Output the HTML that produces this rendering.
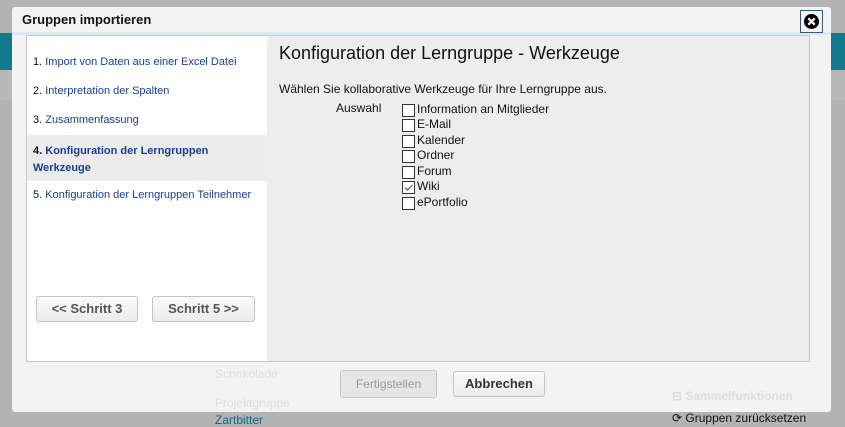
<!DOCTYPE html>
<html><head><meta charset="utf-8"><style>
body{margin:0;width:845px;height:425px;overflow:hidden;background:#b3b3b3;font-family:"Liberation Sans",Arial,sans-serif;position:relative}
.a{position:absolute}
.dlg{left:12px;top:7px;width:819px;height:405px;background:#f3f3f3;border-radius:3px}
.frame{left:26px;top:35px;width:782px;height:325px;border:1px solid #c8c8c8;background:#ededed}
.left{left:27px;top:36px;width:240px;height:325px;background:#fff}
.it{position:absolute;left:6px;font-size:11px;color:#1c3c94}
.it b,.it span.n{color:#111}
.btn{position:absolute;border:1px solid #c4c4c4;border-radius:3px;background:linear-gradient(#fafafa,#ececec);font-size:13px;font-weight:bold;color:#555;text-align:center;box-sizing:border-box}
.cb{position:absolute;left:402px;width:11px;height:11px;border:1px solid #333;background:#fff}
.lb{position:absolute;left:417px;font-size:12px;color:#111}
</style></head><body>
<div class="a" style="left:0;top:33px;width:845px;height:37px;background:#137a8e"></div>
<div class="a" style="left:0;top:70px;width:845px;height:30px;background:#b8b8b8"></div>
<div class="a" style="left:215px;top:413px;font-size:12px;color:#136a7e">Zartbitter</div>
<div class="a" style="left:672px;top:411px;font-size:12px;color:#111">⟳ Gruppen zurücksetzen</div>
<div class="a dlg"></div>
<div class="a" style="left:12px;top:32px;width:819px;height:3px;background:#dce9ee"></div>
<div class="a" style="left:22px;top:12px;font-size:13px;font-weight:bold;color:#111">Gruppen importieren</div>
<div class="a" style="left:800px;top:10px;width:23px;height:23px;border:1px solid #3b5575;box-sizing:border-box"><svg width="21" height="21" viewBox="0 0 21 21"><circle cx="10.5" cy="10.5" r="7.5" fill="#000"/><path d="M7.3 7.3l6.4 6.4M13.7 7.3l-6.4 6.4" stroke="#fff" stroke-width="2.2"/></svg></div>
<div class="a frame"></div>
<div class="a left">
<div class="it" style="top:20px"><span class="n">1.</span> Import von Daten aus einer Excel Datei</div>
<div class="it" style="top:49px"><span class="n">2.</span> Interpretation der Spalten</div>
<div class="it" style="top:78px"><span class="n">3.</span> Zusammenfassung</div>
<div class="a" style="left:0;top:99px;width:240px;height:46px;background:#ececec"></div>
<div class="it" style="top:107px;font-weight:bold;line-height:17px"><b>4.</b> Konfiguration der Lerngruppen<br>Werkzeuge</div>
<div class="it" style="top:153px"><span class="n">5.</span> Konfiguration der Lerngruppen Teilnehmer</div>
</div>
<div class="btn" style="left:36px;top:296px;width:102px;height:26px;line-height:24px">&lt;&lt; Schritt 3</div>
<div class="btn" style="left:152px;top:296px;width:103px;height:26px;line-height:24px">Schritt 5 &gt;&gt;</div>
<div class="a" style="left:279px;top:43px;font-size:18px;color:#111">Konfiguration der Lerngruppe - Werkzeuge</div>
<div class="a" style="left:279px;top:82px;font-size:12px;color:#111">Wählen Sie kollaborative Werkzeuge für Ihre Lerngruppe aus.</div>
<div class="a" style="left:336px;top:101px;font-size:12px;color:#111">Auswahl</div>
<div class="cb" style="top:104px"></div><div class="lb" style="top:102px">Information an Mitglieder</div>
<div class="cb" style="top:119px"></div><div class="lb" style="top:117px">E-Mail</div>
<div class="cb" style="top:135px"></div><div class="lb" style="top:133px">Kalender</div>
<div class="cb" style="top:150px"></div><div class="lb" style="top:148px">Ordner</div>
<div class="cb" style="top:166px"></div><div class="lb" style="top:164px">Forum</div>
<div class="cb" style="top:181px"><svg width="11" height="11" style="position:absolute;left:0;top:0"><path d="M2 5.5l2.5 2.5 5-5" stroke="#555" fill="none" stroke-width="1.2"/></svg></div><div class="lb" style="top:179px">Wiki</div>
<div class="cb" style="top:197px"></div><div class="lb" style="top:195px">ePortfolio</div>
<div class="btn" style="left:340px;top:370px;width:97px;height:28px;line-height:26px;background:#e6e6e6;font-weight:normal;color:#999;font-size:12px">Fertigstellen</div>
<div class="btn" style="left:453px;top:371px;width:92px;height:26px;line-height:24px;color:#333">Abbrechen</div>
<div class="a" style="left:215px;top:367px;font-size:12px;color:#ddd">Schokolade</div>
<div class="a" style="left:215px;top:396px;font-size:12px;color:#ddd">Projektgruppe</div>
<div class="a" style="left:672px;top:389px;font-size:12px;color:#ddd;font-weight:bold">⊟ Sammelfunktionen</div>
</body></html>
